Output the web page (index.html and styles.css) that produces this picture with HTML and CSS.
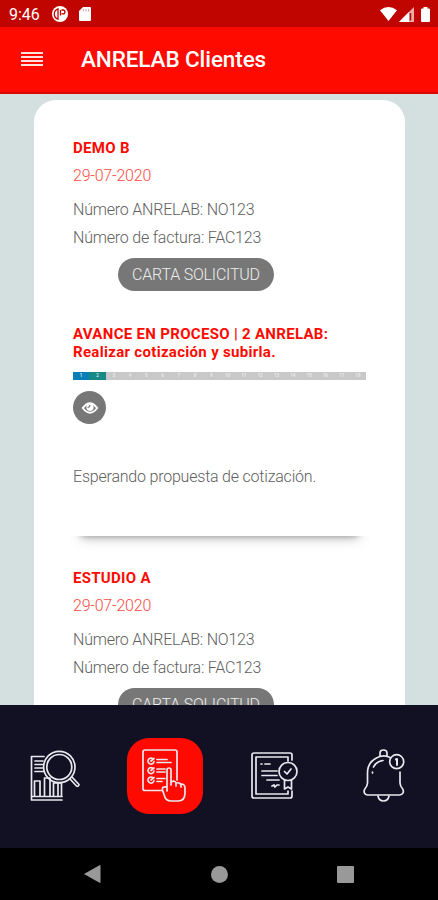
FILE: index.html
```html
<!DOCTYPE html>
<html lang="es">
<head>
  <meta charset="UTF-8" />
  <meta name="viewport" content="width=device-width, initial-scale=1.0"/>
  <title>ANRELAB Clientes</title>
  <link rel="stylesheet" href="styles.css">
</head>
<body>

  <div class="status-bar">
    <span class="time">9:46</span>
    <svg class="app-icon" width="16" height="16" viewBox="0 0 16 16">
      <circle cx="8" cy="8" r="8" fill="#fff"/>
      <path d="M6 2.800a5.500 5.500 0 0 0 0 10.400zM8.500 4v5.500M9.500 4h1.500a1.800 1.800 0 0 1 0 3.800H9.500" fill="none" stroke="#c00500" stroke-width="1.300"/>
    </svg>
    <svg width="12" height="14" viewBox="0 0 12 14">
      <path d="M4 0h7q1 0 1 1v12q0 1-1 1H1q-1 0-1-1V4z" fill="#fff"/>
      <path d="M4.5 2v2.5M7 2v2.5M9.5 2v2.5" stroke="#e08a88" stroke-width=".8"/>
    </svg>
    <div class="status-right">
      <svg width="17" height="14" viewBox="0 0 17 14"><path d="M0 3.2Q8.5-3 17 3.2L8.5 14z" fill="#fff"/></svg>
      <svg width="15" height="15" viewBox="0 0 15 15">
        <path d="M15 0v15H0z" fill="#f0aaa7"/>
        <path d="M10 5v10H0z" fill="#fff"/>
        <path d="M11.5 6v7.5" stroke="#a80400" stroke-width="1.5"/>
      </svg>
      <svg class="battery" width="9" height="15" viewBox="0 0 9 15"><path d="M2.5 0h4v1.500H8q1 0 1 1V14q0 1-1 1H1q-1 0-1-1V2.500q0-1 1-1h1.500z" fill="#fff"/></svg>
    </div>
  </div>

  <header class="app-bar">
    <button class="menu-btn" aria-label="Menú"><i></i><i></i><i></i><i></i></button>
    <h1>ANRELAB Clientes</h1>
  </header>

  <main class="content">
    <div class="card">

      <section class="study">
        <h2>DEMO B</h2>
        <p class="date">29-07-2020</p>
        <p>Número ANRELAB: NO123</p>
        <p>Número de factura: FAC123</p>
        <button class="letter-btn">CARTA SOLICITUD</button>
        <h3>AVANCE EN PROCESO | 2 ANRELAB: Realizar cotización y subirla.</h3>
        <div class="progress">
          <span class="done">1</span><span class="current">2</span><span>3</span><span>4</span><span>5</span><span>6</span><span>7</span><span>8</span><span>9</span><span>10</span><span>11</span><span>12</span><span>13</span><span>14</span><span>15</span><span>16</span><span>17</span><span>18</span>
        </div>
        <button class="eye-btn" aria-label="Ver">
          <svg width="18" height="14" viewBox="0 0 18 14">
            <path d="M1.800 7Q9-2.500 16.200 7Q9 16.500 1.800 7z" fill="none" stroke="#fff" stroke-width="2"/>
            <circle cx="9" cy="6.300" r="3.600" fill="#fff"/>
            <path d="M6.500 6.500q2.500 0 2.500-2.500" fill="none" stroke="#777" stroke-width="1.100"/>
          </svg>
        </button>
        <p class="message">Esperando propuesta de cotización.</p>
        <div class="divider"></div>
      </section>

      <section class="study">
        <h2>ESTUDIO A</h2>
        <p class="date">29-07-2020</p>
        <p>Número ANRELAB: NO123</p>
        <p>Número de factura: FAC123</p>
        <button class="letter-btn">CARTA SOLICITUD</button>
      </section>

    </div>
  </main>

  <nav class="tabs">
    <a class="tab">
      <svg width="50" height="52" viewBox="0 0 50 52">
        <path d="M14 6.500H1.500V50H32M1.500 46.500H32M5 11h8M5 14.500h8M5 18h8M5 21.500h9"/>
        <path d="M4.500 46V31h5.500v15M14.500 46V28h5.500v18M23.500 46V33h8v13M28 33v13"/>
        <circle cx="29.300" cy="17" r="15.700"/>
        <circle cx="29.300" cy="17" r="12.500"/>
        <path d="M40 29l6.500 7q2 1 2.500-1.500L42 27"/>
      </svg>
    </a>
    <a class="tab active">
      <svg width="45" height="54" viewBox="0 0 45 54">
        <path d="M20 41.500H3q-2 0-2-2V3q0-2 2-2h30q2 0 2 2v28"/>
        <path d="M10.500 9.500a3 3 0 1 0 1.500 3M9 12l3-2.500M10.500 19a3 3 0 1 0 1.500 3M9 21.500l3-2.500M10.500 28.500a3 3 0 1 0 1.500 3M9 31l3-2.500"/>
        <path d="M15 10.500h10M15 13.500h14M15 20h8M15 23h8M15 29.500h8M15 32.500h5"/>
        <path d="M25 38V21q0-2 2-2t2 2v15M29 36v-3q4-2 5 1v3M34 34q4-1 5 2v2M39 35q4 0 4 4v5q0 8-7 8h-7q-5 0-6.500-5l-2-6q-1-4 4.500-3v4"/>
      </svg>
    </a>
    <a class="tab">
      <svg width="47" height="47" viewBox="0 0 47 47">
        <path d="M41 8V3q0-2-2-2H3q-2 0-2 2v41q0 2 2 2h36q2 0 2-2v-5"/>
        <path d="M37 9V5H5v37h32v-3M5 25v4"/>
        <path d="M10 12h1M14 12h5M11 19h15M11 23.500h15M16 28h12M21 34l2-1 1 2 2-2h2"/>
        <circle cx="37" cy="19.500" r="9"/>
        <path d="M33.500 19.500l2.500 2.500 4-5M33.500 28v9l3.500-2 3.500 2v-9"/>
      </svg>
    </a>
    <a class="tab">
      <svg width="42" height="53" viewBox="0 0 42 53">
        <path d="M17 7.500V4q0-3 3.500-3T24 4v3.500M27 8.500Q20 5 12.500 9.500Q4.500 14 4.500 24v10q0 3-3 6.500-1.500 4.500 3 5.500h32q5-1 3.500-5.500-3-3.500-3-6.500V23"/>
        <path d="M15 47q1 5 5.500 5t5.500-5M9.500 23v1M10.500 18q2.500-5.500 9.500-6.500"/>
        <circle cx="33.700" cy="12.700" r="7"/>
        <path d="M33 10.500l1-.5v6" stroke-width="2"/>
      </svg>
    </a>
  </nav>

  <footer class="system-nav">
    <svg width="17" height="18" viewBox="0 0 17 18"><path d="M0 9L15.500.2q1-.4 1 .8v16q0 1.200-1 .8z" fill="#999"/></svg>
    <span class="home"></span>
    <span class="recent"></span>
  </footer>

</body>
</html>
```

FILE: styles.css
```css
:root {
  --red: #ff0a00;
  --red-dark: #c00500;
  --bg: #d3e0df;
  --navy: #121023;
  --gray: #777;
}

* {
  box-sizing: border-box;
  margin: 0;
  padding: 0;
}

body {
  font-family: Roboto, sans-serif;
  background: var(--bg);
  height: 900px;
  display: flex;
  flex-direction: column;
  overflow: hidden;
}

button {
  border: none;
  font-family: inherit;
}

svg {
  display: block;
}

.status-bar {
  height: 27px;
  flex: none;
  background: var(--red-dark);
  color: #fff;
  display: flex;
  align-items: center;
  padding: 1px 8px 0 9px;
}

.time {
  width: 43px;
  font-size: 16px;
}

.app-icon {
  margin-right: 11px;
}

.status-right {
  display: flex;
  align-items: center;
  gap: 2px;
  margin-left: auto;
}

.battery {
  margin-left: 5px;
}

.app-bar {
  height: 67px;
  flex: none;
  background: var(--red);
  border-bottom: 2px solid #df0800;
  color: #fff;
  display: flex;
  align-items: center;
  padding: 0 0 2px 21px;
}

.menu-btn {
  width: 22px;
  margin-right: 38px;
  background: none;
  display: grid;
  gap: 2px;
}

.menu-btn i {
  height: 2px;
  background: #ffe0df;
}

h1 {
  font-size: 22.500px;
  font-weight: 500;
  letter-spacing: -0.1px;
}

.content {
  flex: 1;
  min-height: 0;
  padding: 6px 33px 0 34px;
  overflow: hidden;
}

.card {
  background: #fff;
  border-radius: 22px;
  padding: 34px 39px;
}

.study {
  display: flow-root;
  color: #606060;
  font-size: 16px;
  font-weight: 300;
  line-height: 28px;
  letter-spacing: -0.21px;
}

h2 {
  color: var(--red);
  font-size: 15px;
  font-weight: 700;
  letter-spacing: 0.3px;
}

.date {
  color: #ff4a43;
  margin-bottom: 6px;
}

.letter-btn {
  display: block;
  width: 156px;
  height: 33px;
  margin: 6px 0 0 45px;
  border-radius: 17px;
  background: var(--gray);
  color: #eee;
  font-size: 16px;
  font-weight: 300;
  letter-spacing: -0.2px;
}

h3 {
  margin-top: 35px;
  color: var(--red);
  font-size: 15px;
  font-weight: 700;
  line-height: 17.500px;
  letter-spacing: 0.31px;
}

.progress {
  display: flex;
  height: 8px;
  margin-top: 11px;
}

.progress span {
  flex: 1;
  background: #c8c8c8;
  color: #eee;
  font-size: 4.500px;
  font-weight: 500;
  line-height: 8px;
  letter-spacing: 0;
  text-align: center;
}

.progress .done {
  background: #087fb9;
}

.progress .current {
  background: #168987;
}

.eye-btn {
  display: flex;
  align-items: center;
  justify-content: center;
  width: 33px;
  height: 33px;
  margin-top: 11px;
  border-radius: 50%;
  background: var(--gray);
}

.message {
  margin-top: 39px;
}

/* only the lower half of the shadow shows */
.divider {
  height: 28px;
  margin: 45px -4px 0;
  padding: 0 12px;
  overflow: hidden;
}

.divider::before {
  content: "";
  display: block;
  height: 10px;
  margin-top: -10px;
  box-shadow: 0 0 14px rgba(0,0,0,0.35), 0 0 6px rgba(0,0,0,0.3);
}

.tabs {
  height: 143px;
  flex: none;
  background: var(--navy);
  display: flex;
  align-items: center;
  justify-content: space-between;
  padding: 0 16px 2px 17px;
}

.tab {
  width: 76px;
  height: 76px;
  border-radius: 22px;
  display: flex;
  align-items: center;
  justify-content: center;
}

.tab.active {
  background: var(--red);
}

.tab svg {
  fill: none;
  stroke: #e8e8ee;
  stroke-width: 1.700;
  stroke-linecap: round;
  stroke-linejoin: round;
}

.system-nav {
  height: 52px;
  flex: none;
  background: #000;
  display: flex;
  align-items: center;
  justify-content: space-between;
  padding: 0 84px;
}

.home {
  width: 17px;
  height: 17px;
  border-radius: 50%;
  background: #999;
}

.recent {
  width: 17px;
  height: 17px;
  border-radius: 1px;
  background: #999;
}
```
